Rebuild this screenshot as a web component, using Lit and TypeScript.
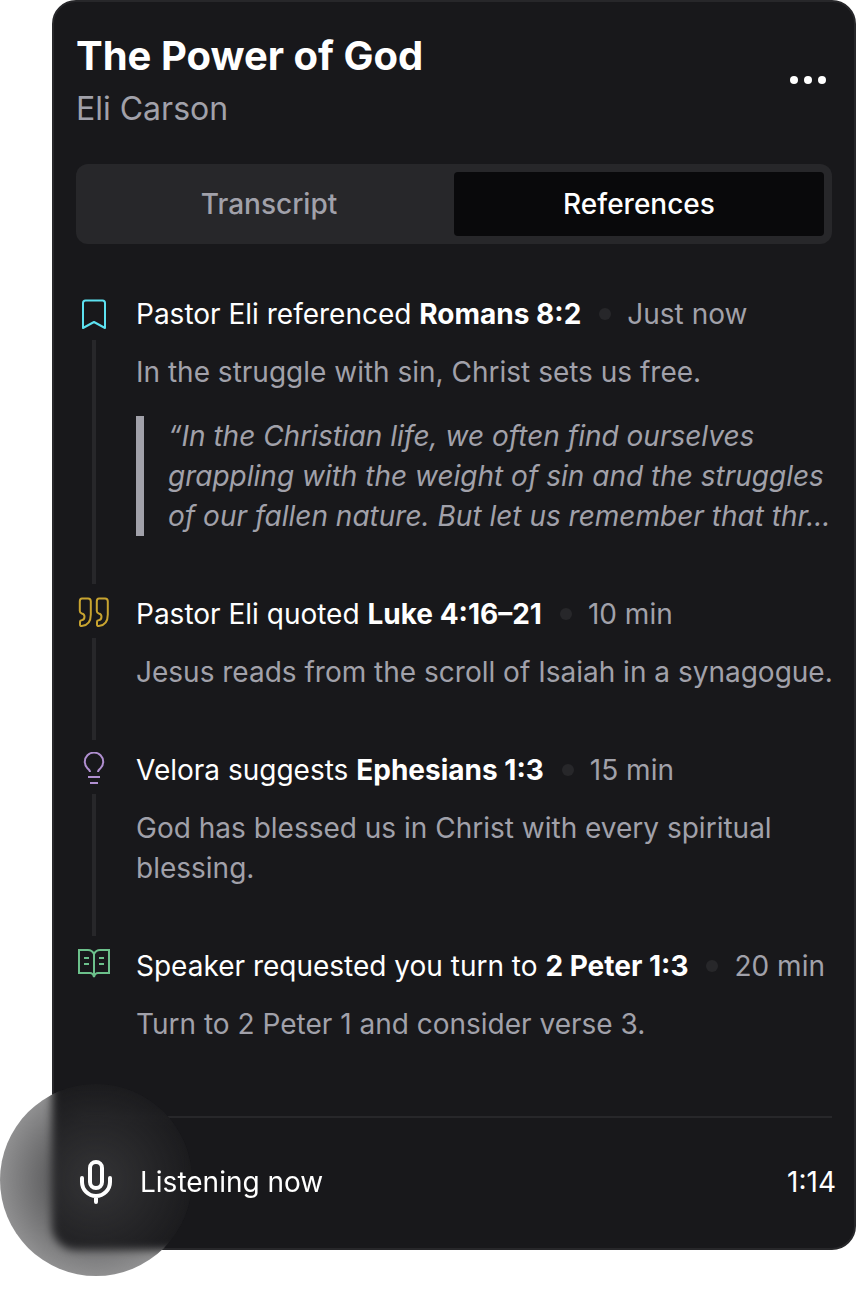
import { LitElement, html, svg, css, nothing } from "lit";
import { customElement, property, state } from "lit/decorators.js";

type IconName = "bookmark" | "quote" | "bulb" | "book";

interface Reference {
  icon: IconName;
  lead: string;
  verse: string;
  time: string;
  summary: string;
  quote?: string;
}

const REFERENCES: Reference[] = [
  {
    icon: "bookmark",
    lead: "Pastor Eli referenced",
    verse: "Romans 8:2",
    time: "Just now",
    summary: "In the struggle with sin, Christ sets us free.",
    quote:
      "“In the Christian life, we often find ourselves grappling with the weight of sin and the struggles of our fallen nature. But let us remember that thr…",
  },
  {
    icon: "quote",
    lead: "Pastor Eli quoted",
    verse: "Luke 4:16–21",
    time: "10 min",
    summary: "Jesus reads from the scroll of Isaiah in a synagogue.",
  },
  {
    icon: "bulb",
    lead: "Velora suggests",
    verse: "Ephesians 1:3",
    time: "15 min",
    summary: "God has blessed us in Christ with every spiritual blessing.",
  },
  {
    icon: "book",
    lead: "Speaker requested you turn to",
    verse: "2 Peter 1:3",
    time: "20 min",
    summary: "Turn to 2 Peter 1 and consider verse 3.",
  },
];

const ICONS = {
  bookmark: {
    height: 36,
    art: svg`<path d="M7 32V7q0-2.500 2.500-2.500h17q2.500 0 2.500 2.500v25l-11-6z"/>`,
  },
  quote: {
    height: 34,
    art: svg`<path d="M6 2.500h6q2.800 0 2.800 3v13c0 7-3.600 11-9 11.500q-1.800.1-1.800-1.600v-2.600q0-1.500 1.500-1.600c2.200-.2 3-1.500 3-3.500s-1-2.800-2.700-3.200q-2-.6-2-2.500v-9.500q0-3 2.200-3z"/><path d="M23 2.500h6q2.800 0 2.800 3v13c0 7-3.600 11-9 11.500q-1.800.1-1.800-1.600v-2.600q0-1.500 1.500-1.600c2.200-.2 3-1.500 3-3.500s-1-2.800-2.700-3.200q-2-.6-2-2.500v-9.500q0-3 2.200-3z"/>`,
  },
  bulb: {
    height: 34,
    art: svg`<path d="M14 20c0-1.800-1-2.300-2.400-3.600A9.200 9.200 0 1 1 24.400 16.400C23 17.700 22 18.200 22 20M12 25h12M14 31h8"/>`,
  },
  book: {
    height: 34,
    art: svg`<path d="M18 6q-2-4-6-4H3v23h11q3 0 4 4 1-4 4-4h11V2h-9q-4 0-6 4zV28M8 10h5M8 16h5M23 10h5M23 16h5"/>`,
  },
};

@customElement("reference-item")
class ReferenceItem extends LitElement {
  @property({ attribute: false }) item!: Reference;
  @property({ type: Boolean }) last = false;

  static styles = css`
    :host {
      display: flex;
      gap: 24px;
    }
    .rail {
      display: flex;
      flex: none;
      flex-direction: column;
      align-items: center;
      width: 36px;
      gap: 8px;
    }
    .icon {
      display: block;
      fill: none;
      stroke-width: 2;
      stroke-linejoin: round;
    }
    .bookmark { stroke: #5ce1f0; }
    .quote { stroke: #c8a430; }
    .bulb { stroke: #b08fd0; }
    .book { stroke: #6cc08b; stroke-linejoin: miter; }
    .line {
      flex: 1;
      width: 4px;
      margin-bottom: 12px;
      background: #27272a;
    }
    .content {
      flex: 1;
      min-width: 0;
      padding-bottom: 60px;
    }
    .content.last { padding-bottom: 72px; }
    .title {
      display: flex;
      flex-wrap: wrap;
      align-items: center;
      margin: 0 0 20px;
      font-size: 28px;
      font-weight: 400;
      line-height: 36px;
      color: #fff;
    }
    .verse { font-weight: 700; }
    .dot {
      width: 12px;
      height: 12px;
      margin: 0 16px 0 18px;
      border-radius: 50%;
      background: #27272a;
    }
    .time, .summary, .excerpt { color: #a1a1aa; }
    .summary {
      margin: 0;
      line-height: 40px;
    }
    .excerpt {
      margin: 24px 0 0;
      padding-left: 24px;
      border-left: 8px solid #a1a1aa;
      line-height: 40px;
      font-style: italic;
    }
  `;

  render() {
    const { icon, lead, verse, time, summary, quote } = this.item;
    const { height, art } = ICONS[icon];
    return html`
      <div class="rail">
        <svg class="icon ${icon}" width="36" height=${height} viewBox="0 0 36 ${height}" aria-hidden="true">${art}</svg>
        ${this.last ? nothing : html`<div class="line"></div>`}
      </div>
      <article class="content ${this.last ? "last" : ""}">
        <h2 class="title">
          <span>${lead} <strong class="verse">${verse}</strong></span>
          <span class="dot"></span>
          <span class="time">${time}</span>
        </h2>
        <p class="summary">${summary}</p>
        ${quote ? html`<blockquote class="excerpt">${quote}</blockquote>` : nothing}
      </article>
    `;
  }
}

@customElement("app-root")
class AppRoot extends LitElement {
  @state() private tab = "References";

  static styles = css`
    :host {
      display: block;
      padding: 0 0 44px 52px;
      background: #fff;
      font-family: Inter, "Liberation Sans", sans-serif;
      font-size: 28px;
      line-height: 40px;
      color: #fff;
    }
    .card {
      position: relative;
      padding: 30px 22px 2px;
      border: 2px solid #27272a;
      border-radius: 24px;
      background: #18181b;
    }
    .header {
      display: flex;
      align-items: flex-start;
      justify-content: space-between;
      margin-bottom: 32px;
    }
    .heading {
      margin: 0 0 6px;
      font-size: 40px;
      font-weight: 700;
      line-height: 48px;
    }
    .speaker {
      margin: 0;
      font-size: 32px;
      line-height: 46px;
      color: #a1a1aa;
    }
    .more {
      display: flex;
      align-items: center;
      height: 96px;
      padding: 0;
      border: 0;
      background: none;
      color: #fff;
      cursor: pointer;
    }
    .tabs {
      display: flex;
      margin-bottom: 52px;
      padding: 8px;
      border-radius: 12px;
      background: #27272a;
    }
    .tab {
      flex: 1;
      height: 64px;
      padding: 0;
      border: 0;
      border-radius: 4px;
      background: none;
      font: inherit;
      font-weight: 500;
      color: #a1a1aa;
      cursor: pointer;
    }
    .tab.active {
      background: #09090b;
      color: #fff;
    }
    .bleed { margin-right: -4px; }
    .footer {
      display: flex;
      align-items: center;
      justify-content: space-between;
      height: 128px;
      border-top: 2px solid #27272a;
    }
    .glow {
      position: absolute;
      left: -54px;
      bottom: -28px;
      width: 192px;
      height: 192px;
      border-radius: 50%;
      background: radial-gradient(closest-side, rgb(52, 52, 54), rgba(32, 32, 34, 0.5));
      backdrop-filter: blur(4px);
    }
    .status {
      position: relative;
      display: flex;
      align-items: center;
      gap: 24px;
    }
    .mic {
      display: block;
      width: 40px;
      height: 48px;
      fill: none;
      stroke: #fff;
      stroke-width: 4;
      stroke-linecap: round;
    }
  `;

  render() {
    return html`
      <main class="card">
        <header class="header">
          <div>
            <h1 class="heading">The Power of God</h1>
            <p class="speaker">Eli Carson</p>
          </div>
          <button class="more" aria-label="More options">
            <svg width="48" height="48" viewBox="0 0 48 48" fill="currentColor" aria-hidden="true">
              <circle cx="10" cy="24" r="4" /><circle cx="24" cy="24" r="4" /><circle cx="38" cy="24" r="4" />
            </svg>
          </button>
        </header>
        <div class="tabs" role="tablist">
          ${["Transcript", "References"].map(
            (name) => html`<button
              class="tab ${name === this.tab ? "active" : ""}"
              role="tab"
              aria-selected=${name === this.tab}
              @click=${() => (this.tab = name)}
            >${name}</button>`
          )}
        </div>
        <section class="bleed">
          ${REFERENCES.map(
            (item, i) => html`<reference-item .item=${item} ?last=${i === REFERENCES.length - 1}></reference-item>`
          )}
        </section>
        <footer class="footer">
          <div class="glow"></div>
          <div class="status">
            <svg class="mic" viewBox="0 0 40 48" aria-hidden="true">
              <rect x="14" y="4" width="12" height="26" rx="6" />
              <path d="M6 20v4a14 14 0 0 0 28 0v-4M20 38v6" />
            </svg>
            <span>Listening now</span>
          </div>
          <time class="bleed">1:14</time>
        </footer>
      </main>
    `;
  }
}
